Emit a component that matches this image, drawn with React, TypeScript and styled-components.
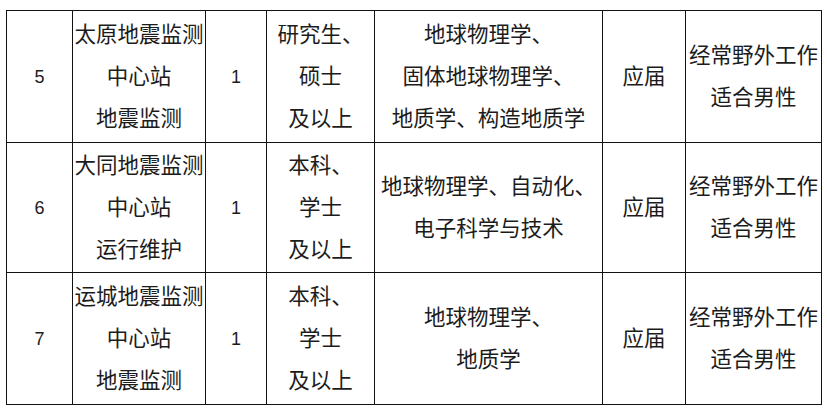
import React from 'react';
import styled, { createGlobalStyle } from 'styled-components';

interface Row {
  no: string;
  unit: string[];
  count: string;
  degree: string[];
  major: string[];
  kind: string;
  note: string[];
}

const rows: Row[] = [
  {
    no: '5',
    unit: ['太原地震监测', '中心站', '地震监测'],
    count: '1',
    degree: ['研究生、', '硕士', '及以上'],
    major: ['地球物理学、', '固体地球物理学、', '地质学、构造地质学'],
    kind: '应届',
    note: ['经常野外工作', '适合男性'],
  },
  {
    no: '6',
    unit: ['大同地震监测', '中心站', '运行维护'],
    count: '1',
    degree: ['本科、', '学士', '及以上'],
    major: ['地球物理学、自动化、', '电子科学与技术'],
    kind: '应届',
    note: ['经常野外工作', '适合男性'],
  },
  {
    no: '7',
    unit: ['运城地震监测', '中心站', '地震监测'],
    count: '1',
    degree: ['本科、', '学士', '及以上'],
    major: ['地球物理学、', '地质学'],
    kind: '应届',
    note: ['经常野外工作', '适合男性'],
  },
];

const colWidths = [66, 133, 61, 108, 228, 83, 136];
const rowHeights = [132, 130, 132];

const Lines = ({ items }: { items: string[] }): JSX.Element => (
  <>
    {items.map((t) => (
      <Line key={t}>{t}</Line>
    ))}
  </>
);

const App = (): JSX.Element => {
  return (
    <Page>
      <GlobalStyle />
      <Table>
        <colgroup>
          {colWidths.map((w, i) => (
            <col key={i} style={{ width: w }} />
          ))}
        </colgroup>
        <tbody>
          {rows.map((row, index) => (
            <tr key={row.no} style={{ height: rowHeights[index] }}>
              <Cell isNumber>{row.no}</Cell>
              <Cell>
                <Lines items={row.unit} />
              </Cell>
              <Cell isNumber>{row.count}</Cell>
              <Cell>
                <Lines items={row.degree} />
              </Cell>
              <Cell>
                <Lines items={row.major} />
              </Cell>
              <Cell>{row.kind}</Cell>
              <Cell>
                <Lines items={row.note} />
              </Cell>
            </tr>
          ))}
        </tbody>
      </Table>
    </Page>
  );
};

const GlobalStyle = createGlobalStyle`
  html, body {
    margin: 0;
    padding: 0;
    background: #ffffff;
  }
`;

const Page = styled.div`
  width: 827px;
  height: 410px;
  padding: 10px 0 0 6px;
  box-sizing: border-box;
  background: #ffffff;
  font-family: 'Liberation Sans', 'Noto Sans CJK SC', sans-serif;
  color: #1c1c1c;
`;

const Table = styled.table`
  table-layout: fixed;
  border-collapse: collapse;
  width: 815px;
  border: 1px solid #111111;
`;

const Cell = styled.td<{ isNumber?: boolean }>`
  border: 1px solid #111111;
  padding: 0;
  text-align: center;
  vertical-align: middle;
  white-space: nowrap;
  font-size: ${({ isNumber }): string => (isNumber ? '18px' : '21.5px')};
  line-height: 42px;
`;

const Line = styled.div`
  line-height: 42px;
`;

export default App;
